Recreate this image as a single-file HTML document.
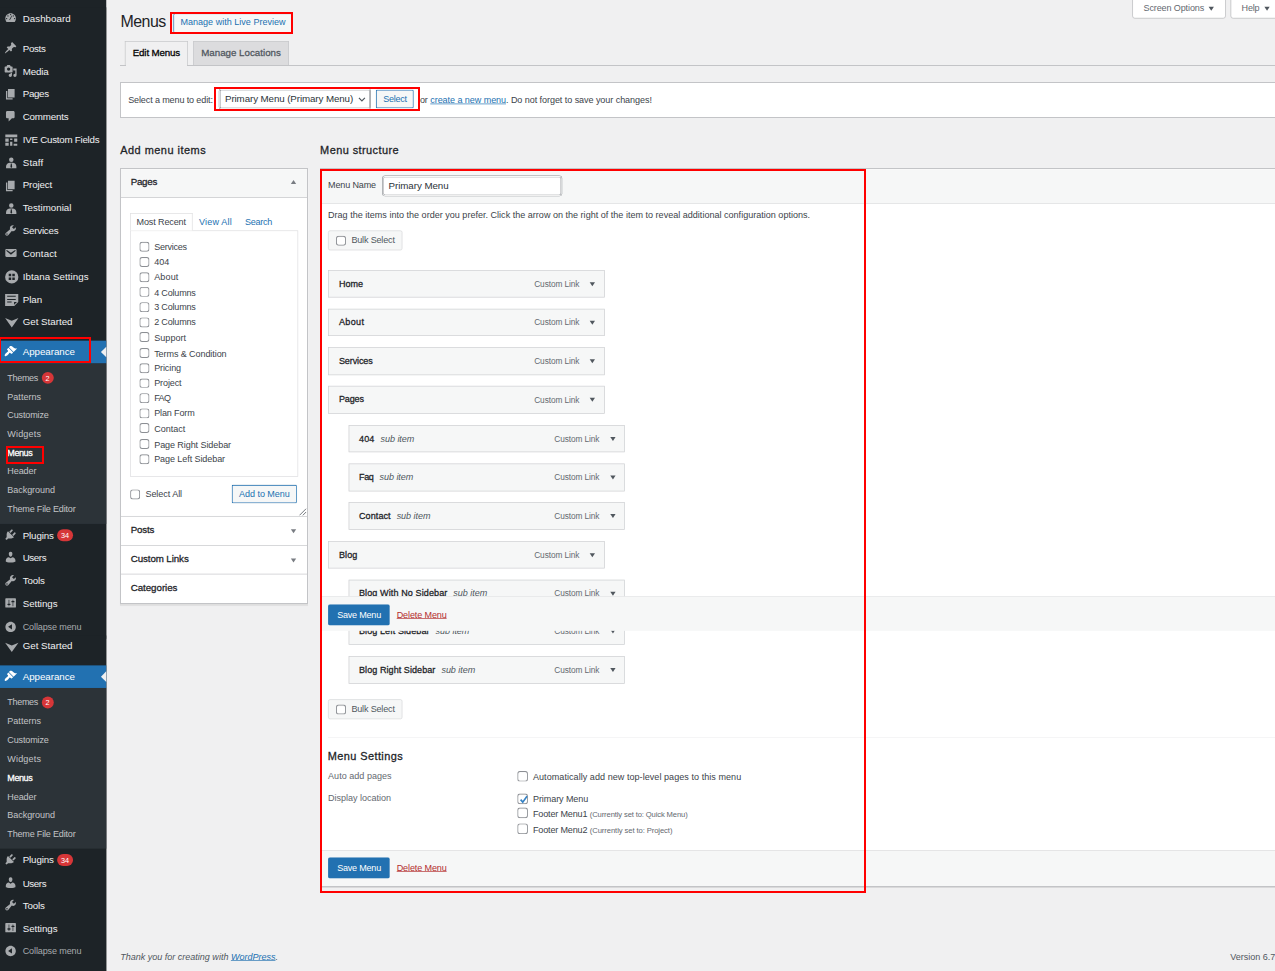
<!DOCTYPE html>
<html lang="en">
<head>
<meta charset="utf-8">
<title>Menus</title>
<style>
html,body{margin:0;padding:0;background:#f0f0f1;}
body{width:1275px;height:971px;overflow:hidden;position:relative;}
#root{position:absolute;left:0;top:0;width:1920px;height:1463px;transform:scale(0.6640625);transform-origin:0 0;font-family:"Liberation Sans",sans-serif;font-size:13.6px;line-height:1.4;color:#3c434a;background:#f0f0f1;overflow:hidden;}
#root *{box-sizing:border-box;}
a{color:#2271b1;}
/* ---------- sidebar ---------- */
#side{position:absolute;left:0;top:0;width:160px;height:1463px;background:#1d2327;}
.sec{position:absolute;left:0;width:160px;background:#1d2327;}
.mi{position:relative;height:34.3px;width:160px;color:#f0f0f1;font-size:14.7px;line-height:34.3px;white-space:nowrap;}
.mi svg{position:absolute;left:5.5px;top:6.2px;width:20px;height:20px;fill:#a7aaad;overflow:visible;}
.mi .t{position:absolute;left:34.2px;top:0;}
.mi.pg .t{top:-0.8px;}
.mi.pg svg{top:7.5px;}
.mi.cur{background:#2271b1;color:#fff;}
.mi.cur svg{fill:#fff;}
.mi.cur:after{content:"";position:absolute;right:0;top:9.1px;border:8px solid transparent;border-right-color:#f0f0f1;}
.mi.col{color:#a7aaad;font-size:13.6px;}
.sep{height:11px;}
.sub{background:#2c3338;padding:8px 0 7px;}
.sub div{height:28.16px;line-height:28.16px;font-size:13.6px;color:#c3c4c7;padding-left:11px;white-space:nowrap;}
.sub div.c{color:#fff;}
.bdg{display:inline-block;vertical-align:top;background:#d63638;color:#fff;font-size:11px;line-height:18px;height:18px;min-width:18px;border-radius:9px;text-align:center;padding:0 5.7px;margin:8px 0 0 5px;font-weight:normal;}
.sub .bdg{margin:5px 0 0 5.5px;padding:0 5px;}

/* ---------- main ---------- */
#main{position:absolute;left:0;top:0;width:1920px;height:1463px;}
.abs{position:absolute;white-space:nowrap;}
.smeta{position:absolute;top:-10px;height:37.5px;background:#fff;border:1px solid #b4b5b8;border-radius:0 0 4px 4px;color:#646970;font-size:13.6px;line-height:22px;padding:9.5px 0 0 16px;white-space:nowrap;}
.tri{position:relative;top:1px;display:inline-block;width:0;height:0;border:4.5px solid transparent;border-top:6px solid #50575e;border-bottom:0;vertical-align:middle;}
h1{position:absolute;left:181.5px;top:17.5px;margin:0;font-size:24px;font-weight:normal;line-height:29.9px;color:#1d2327;white-space:nowrap;}
.pta{position:absolute;left:260.5px;top:19.6px;width:179.3px;text-align:center;text-indent:1.5px;height:30px;border:1px solid #2271b1;border-left-width:1.5px;border-radius:3px;background:#f6f7f7;color:#2271b1;font-size:13.6px;line-height:25px;padding:0;white-space:nowrap;}
.tabline{display:none;}
.ntab{position:absolute;top:61.7px;height:36.8px;border:1px solid #c3c4c7;border-bottom:none;background:#dcdcde;color:#50575e;font-size:14.7px;line-height:24px;padding:5.7px 0 0;text-align:center;white-space:nowrap;}
.ntab.act{background:#f0f0f1;color:#000;height:37.8px;}
.mm{position:absolute;left:180.8px;top:124px;width:1760px;height:52.5px;background:#fff;border:1px solid #fff;}
.sel{position:absolute;height:30px;border:1px solid transparent;box-shadow:0 0 0 .5px #7a7d82,inset 0 0 0 .9px #7a7d82;border-radius:3px;background:#fff;color:#2c3338;font-size:14.7px;line-height:28px;padding:0 8px;white-space:nowrap;}
.btn{position:absolute;height:30px;border:1px solid transparent;box-shadow:inset 0 0 0 1.3px #2271b1;border-radius:3px;background:#f6f7f7;color:#2271b1;font-size:13.6px;line-height:28px;padding:0 10px;white-space:nowrap;text-align:center;}
.btn.pri{box-shadow:none;background:#2271b1;color:#fff;height:32px;line-height:30px;padding:0 12px;}
.btn.gray{box-shadow:none;border:1px solid #d5d6d8;color:#50575e;background:#f6f7f7;}
h2{position:absolute;margin:0;font-size:16.5px;font-weight:normal;line-height:24px;color:#1d2327;white-space:nowrap;}
/* accordion */
.acc{position:absolute;left:180.8px;top:253.6px;width:283px;height:657px;background:#fff;border:1px solid #fff;box-shadow:0 1px 1px rgba(0,0,0,.06);}
.acch{position:absolute;left:0;width:281px;height:43.5px;border-bottom:1px solid #c3c4c7;font-size:14.7px;color:#1d2327;line-height:40.8px;padding-left:15px;}
.acch i{position:absolute;right:17px;top:19px;width:0;height:0;border:4px solid transparent;}
.acch i.up{border-bottom:6px solid #787c82;border-top:0;top:16.5px;}
.acch i.dn{border-top:6px solid #787c82;border-bottom:0;}
.ptab{position:absolute;font-size:13.6px;white-space:nowrap;line-height:18px;}
.panel{position:absolute;left:14.4px;top:92px;width:252.5px;height:371.5px;border:1px solid #dcdcde;background:#fff;}
.cb{position:absolute;width:15.1px;height:14.9px;border-radius:4px;background:#fff;box-shadow:inset 0 0 0 1.4px #8c8f94,inset 0 2px 2px rgba(0,0,0,.06);}
.row{position:absolute;left:13px;height:22.7px;font-size:13.6px;line-height:22.7px;color:#3c434a;white-space:nowrap;}
.row .cb{left:-0.6px;top:2.7px;}
.row>span{position:absolute;left:22px;top:0;}
/* menu management */
.mgmt{position:absolute;left:482.6px;top:254px;width:1460px;height:1082px;background:#fff;border:1px solid #fff;box-shadow:0 1px 1px rgba(0,0,0,.08);}
.mhead{position:absolute;left:0;top:0;width:100%;height:51.5px;background:#f6f7f7;border-bottom:1px solid #dcdcde;}
.mfoot{position:absolute;left:0;bottom:0;width:100%;height:53px;background:#f6f7f7;border-top:1px solid #dcdcde;}
.inp{position:absolute;height:30px;border:1px solid transparent;box-shadow:0 0 0 .6px #8c8f94,inset 0 0 0 .8px #8c8f94;border-radius:4px;background:#fff;color:#2c3338;font-size:14.7px;line-height:28px;padding:0 8px;}
.bar{position:absolute;width:416.6px;height:41.5px;background:#f6f7f7;border:1px solid #cdced1;font-size:13.6px;color:#1d2327;line-height:39.5px;padding-left:15px;white-space:nowrap;}
.bar em{font-weight:normal;font-style:italic;color:#50575e;margin-left:9px;}
.bar b{position:absolute;right:37.6px;top:1.3px;font-weight:normal;font-size:12.5px;color:#646970;}
.bar i{position:absolute;right:13.6px;top:17px;width:0;height:0;border:4.2px solid transparent;border-top:6.5px solid #50575e;border-bottom:0;}
.sticky{position:absolute;background:#f6f7f7;z-index:5;}
.del{position:absolute;color:#b32d2e;text-decoration:underline;font-size:13.6px;white-space:nowrap;}
.lbl{position:absolute;font-size:13.6px;color:#646970;white-space:nowrap;}
.txt{position:absolute;font-size:13.6px;color:#3c434a;white-space:nowrap;}
.sm{font-size:11.5px;color:#646970;}
/* ---------- annotations ---------- */
.red{position:absolute;border:2px solid #f00;z-index:50;box-sizing:border-box;}
.sb{-webkit-text-stroke:0.4px currentColor;}
h2 .sb,h2.sb{-webkit-text-stroke:0.42px currentColor;}
.secb .sub div{height:28.4px;line-height:28.4px;}
.ln{position:absolute;box-sizing:border-box;border:1px solid #c3c4c7;z-index:40;}
.hl{position:absolute;height:1px;background:#c3c4c7;z-index:40;}
.seca .sub{padding-bottom:8.1px;}
.seca .mi.col{margin-top:1.5px;}
.secb>.mi:first-child .t{top:-1.9px;}
</style>
</head>
<body>
<div id="root">
<div id="side">
<div class="sec seca" style="top:11px">
<div class="mi"><svg viewBox="0 0 20 20"><path d="M3.76 16h12.48A7.96 7.96 0 0 0 18 11c0-4.42-3.58-8-8-8s-8 3.58-8 8c0 1.89.66 3.63 1.76 5zM10 4a1 1 0 1 1 0 2 1 1 0 0 1 0-2zM6 6a1 1 0 1 1 0 2 1 1 0 0 1 0-2zm8 0a1 1 0 1 1 0 2 1 1 0 0 1 0-2zm-5.37 5.55l2.75-4.82c.12-.2.37-.26.57-.14.19.11.26.35.16.55l-2.36 5.01c-.38.72-1.12.8-1.69.47s-.81-.35.57-1.07zM4 10a1 1 0 1 1 0 2 1 1 0 0 1 0-2zm12 0a1 1 0 1 1 0 2 1 1 0 0 1 0-2z"/></svg><span class="t"><span style="letter-spacing:0.053px">Dashboard</span></span></div>
<div class="sep"></div>
<div class="mi"><svg viewBox="0 0 20 20"><path d="M10.44 3.02l1.82-1.82 6.36 6.35-1.83 1.82c-1.05-.68-2.48-.57-3.41.36l-.75.75c-.92.93-1.04 2.35-.35 3.41l-1.83 1.82-2.41-2.41-2.8 2.79c-.42.42-3.38 2.71-3.8 2.29s1.86-3.39 2.28-3.81l2.79-2.79L4.1 9.36l1.83-1.82c1.05.69 2.48.57 3.4-.36l.75-.75c.93-.92 1.05-2.35.36-3.41z"/></svg><span class="t"><span style="letter-spacing:-0.487px">Posts</span></span></div>
<div class="mi"><svg viewBox="0 0 20 20"><path d="M13 11V4c0-.55-.45-1-1-1h-1.67L9 1H5L3.67 3H2c-.55 0-1 .45-1 1v7c0 .55.45 1 1 1h10c.55 0 1-.45 1-1zM7 4.5a2.5 2.5 0 1 1 0 5 2.5 2.5 0 0 1 0-5zM14 6h5v10.5a2.5 2.5 0 1 1-2.5-2.5c.17 0 .34.02.5.05V9h-3V6zm-4 8.05V13h2v3.5A2.5 2.5 0 1 1 9.5 14c.17 0 .34.02.5.05z"/></svg><span class="t"><span style="letter-spacing:-0.178px">Media</span></span></div>
<div class="mi pg"><svg viewBox="0 0 20 20"><path d="M6 15V2h10v13H6zm-1 1h8v2H3V5h2v11z"/></svg><span class="t"><span style="letter-spacing:-0.475px">Pages</span></span></div>
<div class="mi"><svg viewBox="0 0 20 20"><path d="M5 2h9c1.1 0 2 .9 2 2v7c0 1.1-.9 2-2 2h-2l-5 5v-5H5c-1.1 0-2-.9-2-2V4c0-1.1.9-2 2-2z"/></svg><span class="t"><span style="letter-spacing:-0.249px">Comments</span></span></div>
<div class="mi"><svg viewBox="0 0 20 20"><path d="M2 2.600h18v4.100H2zM2 8.700h5.100v4.800H2zM9.200 8.700h3.400v2H9.200zM15.300 8.700H20v4.800h-4.700zM2 14.900h5.100v4.400H2zM9.200 13.500h3.400v5.800H9.200zM14.500 16.300H20v3h-5.500z"/></svg><span class="t"><span style="letter-spacing:-0.364px">IVE Custom Fields</span></span></div>
<div class="mi"><svg viewBox="0 0 20 20"><path d="M11 3a3.400 3.400 0 1 1 0 6.800A3.400 3.400 0 0 1 11 3zM3.100 19.400v-2.500c0-3.400 2.900-5.800 5.900-5.800h4c3 0 5.700 2.400 5.700 5.800v2.500zM10.300 12.200l-.6 5.200 1.300 1.400 1.300-1.400-.6-5.200z" fill-rule="evenodd"/></svg><span class="t"><span style="letter-spacing:0.267px">Staff</span></span></div>
<div class="mi pg"><svg viewBox="0 0 20 20"><path d="M6 15V2h10v13H6zm-1 1h8v2H3V5h2v11z"/></svg><span class="t"><span style="letter-spacing:-0.191px">Project</span></span></div>
<div class="mi"><svg viewBox="0 0 20 20"><path d="M11 3a3.400 3.400 0 1 1 0 6.800A3.400 3.400 0 0 1 11 3zM3.100 19.400v-2.500c0-3.400 2.900-5.800 5.900-5.800h4c3 0 5.700 2.400 5.700 5.800v2.500zM10.300 12.200l-.6 5.200 1.300 1.400 1.300-1.400-.6-5.200z" fill-rule="evenodd"/></svg><span class="t"><span style="letter-spacing:-0.013px">Testimonial</span></span></div>
<div class="mi"><svg viewBox="0 0 20 20"><path d="M16.680 9.770a4.543 4.543 0 0 1-4.950.99l-5.410 6.520c-.99.990-2.590.990-3.580 0s-.99-2.590 0-3.570l6.520-5.420c-.68-1.650-.35-3.610.990-4.950 1.280-1.280 3.120-1.620 4.720-1.060l-2.890 2.890 2.820 2.820 2.860-2.870c.53 1.580.18 3.390-1.080 4.650zM3.810 16.210c.4.39 1.040.39 1.430 0 .4-.4.4-1.040 0-1.430-.39-.4-1.030-.4-1.430 0a1.020 1.020 0 0 0 0 1.430z"/></svg><span class="t"><span style="letter-spacing:-0.324px">Services</span></span></div>
<div class="mi"><svg viewBox="0 0 20 20"><path d="M3.870 4h13.250C18.370 4 19 4.590 19 5.790v8.420c0 1.190-.63 1.790-1.880 1.790H3.870c-1.250 0-1.880-.6-1.880-1.790V5.790c0-1.200.63-1.790 1.880-1.790zm6.620 8.600l6.740-5.530c.24-.2.430-.66.130-1.070-.29-.41-.82-.42-1.170-.17l-5.700 3.860L4.800 5.830c-.35-.25-.88-.24-1.170.17-.3.410-.11.870.130 1.070z"/></svg><span class="t"><span style="letter-spacing:0.121px">Contact</span></span></div>
<div class="mi"><svg viewBox="0 0 20 20"><path d="M11.700 2a10 10 0 1 1 0 20 10 10 0 0 1 0-20zM7.100 7.400v3.750h3.750V7.400zm5.450 0v3.750h3.750V7.400zM7.100 12.850v3.750h3.750v-3.750zm5.450 0v3.750h3.750v-3.750z" fill-rule="evenodd"/></svg><span class="t"><span style="letter-spacing:0.088px">Ibtana Settings</span></span></div>
<div class="mi"><svg viewBox="0 0 20 20"><path d="M1.700 2.750h19.800v12l-6 6H1.700zM4.800 5.500v1.400h12.900V5.500zm0 4.700v1.400h12.900v-1.400zm0 3.900v1.300h6.700v-1.300zM15.200 14.600v4.300l4.300-4.300z" fill-rule="evenodd"/></svg><span class="t"><span style="letter-spacing:-0.064px">Plan</span></span></div>
<div class="mi"><svg viewBox="0 0 20 20"><path d="M1.700 5L11.750 8.900 21.800 5 11.750 19z"/></svg><span class="t"><span style="letter-spacing:-0.012px">Get Started</span></span></div>
<div class="sep"></div>
<div class="mi cur"><svg viewBox="0 0 20 20"><path d="M14.480 11.060L7.410 3.990l1.500-1.500c.5-.56 2.300-.47 3.510.32 1.210.8 1.430 1.280 2.910 2.100 1.180.64 2.450 1.260 4.450.85zm-.71.71L6.700 4.700 4.930 6.470c-.39.390-.39 1.020 0 1.410l1.060 1.060c.39.390.39 1.030 0 1.420-.6.6-1.430 1.110-2.210 1.690-.35.260-.7.530-1.010.84C1.430 14.230.4 16.080 1.400 17.070c.99 1 2.840-.030 4.180-1.360.31-.31.580-.66.850-1.020.57-.78 1.080-1.610 1.690-2.210a.996.996 0 0 1 1.410 0l1.060 1.060c.39.390 1.020.390 1.410 0z"/></svg><span class="t"><span style="letter-spacing:-0.051px">Appearance</span></span></div>
<div class="sub"><div><span style="letter-spacing:-0.485px">Themes</span><span class="bdg">2</span></div><div><span style="letter-spacing:0.018px">Patterns</span></div><div><span style="letter-spacing:-0.216px">Customize</span></div><div><span style="letter-spacing:0.248px">Widgets</span></div><div class="c"><span class="sb" style="letter-spacing:-0.641px">Menus</span></div><div><span style="letter-spacing:-0.124px">Header</span></div><div><span style="letter-spacing:-0.081px">Background</span></div><div><span style="letter-spacing:-0.267px">Theme File Editor</span></div></div>
<div class="mi"><svg viewBox="0 0 20 20"><path d="M13.110 4.360L9.870 7.600 8 5.730l3.240-3.240c.35-.34 1.050-.2 1.560.32.520.51.660 1.210.31 1.550zm-8 1.770l.91-1.120 9.010 9.010-1.190.84c-.71.710-2.630 1.160-3.820 1.160H6.140L4.900 17.260c-.59.590-1.540.590-2.120 0a1.490 1.490 0 0 1 0-2.120l1.240-1.240v-3.880c0-1.130.4-3.190 1.090-3.890zm7.260 3.970l3.240-3.240c.34-.35 1.040-.21 1.550.31.520.51.660 1.210.31 1.550l-3.240 3.250z"/></svg><span class="t"><span style="letter-spacing:-0.198px">Plugins</span><span class="bdg">34</span></span></div>
<div class="mi"><svg viewBox="0 0 20 20"><path d="M10 9.250c-2.270 0-2.730-3.440-2.730-3.440C7 4.020 7.820 2 9.970 2c2.160 0 2.980 2.020 2.710 3.810 0 0-.41 3.440-2.680 3.440zm0 2.570L12.720 10c2.390 0 4.520 2.330 4.520 4.530v2.490s-3.650 1.130-7.240 1.130c-3.650 0-7.240-1.130-7.240-1.130v-2.490c0-2.250 1.940-4.480 4.470-4.480z"/></svg><span class="t"><span style="letter-spacing:-0.592px">Users</span></span></div>
<div class="mi"><svg viewBox="0 0 20 20"><path d="M16.680 9.770a4.543 4.543 0 0 1-4.950.99l-5.410 6.520c-.99.990-2.590.990-3.580 0s-.99-2.590 0-3.570l6.520-5.420c-.68-1.650-.35-3.610.990-4.950 1.280-1.280 3.120-1.620 4.720-1.060l-2.890 2.890 2.820 2.820 2.860-2.870c.53 1.580.18 3.390-1.080 4.650zM3.810 16.210c.4.39 1.040.39 1.430 0 .4-.4.4-1.040 0-1.430-.39-.4-1.030-.4-1.430 0a1.020 1.020 0 0 0 0 1.430z"/></svg><span class="t"><span style="letter-spacing:-0.254px">Tools</span></span></div>
<div class="mi"><svg viewBox="0 0 20 20"><path d="M18 16V4c0-.55-.45-1-1-1H3c-.55 0-1 .45-1 1v12c0 .55.45 1 1 1h14c.55 0 1-.45 1-1zM8 11h1c.55 0 1 .45 1 1s-.45 1-1 1H8v1.500c0 .28-.22.5-.5.5s-.5-.22-.5-.5V13H6c-.55 0-1-.45-1-1s.45-1 1-1h1V5.500c0-.28.22-.5.5-.5s.5.22.5.5V11zm5-2h-1c-.55 0-1-.45-1-1s.45-1 1-1h1V5.500c0-.28.22-.5.5-.5s.5.22.5.5V7h1c.55 0 1 .45 1 1s-.45 1-1 1h-1v5.500c0 .28-.22.5-.5.5s-.5-.22-.5-.5V9z"/></svg><span class="t"><span style="letter-spacing:-0.075px">Settings</span></span></div>
<div class="mi col"><svg viewBox="0 0 20 20"><path d="M10 2.160c4.330 0 7.840 3.510 7.840 7.840s-3.510 7.840-7.840 7.840S2.160 14.330 2.160 10 5.670 2.160 10 2.160zm2 11.720V6.120L6.180 9.970z"/></svg><span class="t"><span style="letter-spacing:-0.178px">Collapse menu</span></span></div>
</div>
<div class="sec secb" style="top:956.5px;height:520px">
<div class="mi"><svg viewBox="0 0 20 20"><path d="M1.700 5L11.750 8.900 21.800 5 11.750 19z"/></svg><span class="t"><span style="letter-spacing:-0.012px">Get Started</span></span></div>
<div class="sep"></div>
<div class="mi cur"><svg viewBox="0 0 20 20"><path d="M14.480 11.060L7.410 3.990l1.500-1.500c.5-.56 2.300-.47 3.510.32 1.210.8 1.430 1.280 2.910 2.100 1.180.64 2.450 1.260 4.450.85zm-.71.71L6.700 4.700 4.930 6.470c-.39.390-.39 1.020 0 1.410l1.060 1.060c.39.390.39 1.030 0 1.420-.6.6-1.430 1.110-2.210 1.690-.35.260-.7.530-1.010.84C1.430 14.230.4 16.080 1.400 17.070c.99 1 2.840-.030 4.180-1.360.31-.31.580-.66.850-1.020.57-.78 1.080-1.610 1.690-2.210a.996.996 0 0 1 1.410 0l1.060 1.060c.39.390 1.020.390 1.410 0z"/></svg><span class="t"><span style="letter-spacing:-0.051px">Appearance</span></span></div>
<div class="sub"><div><span style="letter-spacing:-0.485px">Themes</span><span class="bdg">2</span></div><div><span style="letter-spacing:0.018px">Patterns</span></div><div><span style="letter-spacing:-0.216px">Customize</span></div><div><span style="letter-spacing:0.248px">Widgets</span></div><div class="c"><span class="sb" style="letter-spacing:-0.641px">Menus</span></div><div><span style="letter-spacing:-0.124px">Header</span></div><div><span style="letter-spacing:-0.081px">Background</span></div><div><span style="letter-spacing:-0.267px">Theme File Editor</span></div></div>
<div class="mi"><svg viewBox="0 0 20 20"><path d="M13.110 4.360L9.870 7.600 8 5.730l3.240-3.240c.35-.34 1.050-.2 1.560.32.520.51.660 1.210.31 1.550zm-8 1.770l.91-1.120 9.010 9.010-1.190.84c-.71.710-2.630 1.160-3.820 1.160H6.140L4.900 17.260c-.59.590-1.540.590-2.120 0a1.490 1.490 0 0 1 0-2.120l1.240-1.240v-3.880c0-1.130.4-3.190 1.090-3.890zm7.260 3.970l3.240-3.240c.34-.35 1.040-.21 1.550.31.520.51.660 1.210.31 1.550l-3.240 3.250z"/></svg><span class="t"><span style="letter-spacing:-0.198px">Plugins</span><span class="bdg">34</span></span></div>
<div class="mi"><svg viewBox="0 0 20 20"><path d="M10 9.250c-2.270 0-2.730-3.440-2.730-3.440C7 4.020 7.820 2 9.970 2c2.160 0 2.980 2.020 2.710 3.810 0 0-.41 3.440-2.680 3.440zm0 2.570L12.720 10c2.390 0 4.520 2.330 4.520 4.530v2.490s-3.650 1.130-7.240 1.130c-3.650 0-7.240-1.130-7.240-1.130v-2.490c0-2.250 1.940-4.480 4.470-4.480z"/></svg><span class="t"><span style="letter-spacing:-0.592px">Users</span></span></div>
<div class="mi"><svg viewBox="0 0 20 20"><path d="M16.680 9.770a4.543 4.543 0 0 1-4.950.99l-5.410 6.520c-.99.990-2.590.990-3.580 0s-.99-2.590 0-3.570l6.520-5.420c-.68-1.650-.35-3.610.990-4.950 1.280-1.280 3.120-1.620 4.720-1.060l-2.890 2.890 2.820 2.820 2.860-2.870c.53 1.580.18 3.390-1.080 4.650zM3.810 16.210c.4.39 1.040.39 1.430 0 .4-.4.4-1.040 0-1.430-.39-.4-1.030-.4-1.430 0a1.020 1.020 0 0 0 0 1.430z"/></svg><span class="t"><span style="letter-spacing:-0.254px">Tools</span></span></div>
<div class="mi"><svg viewBox="0 0 20 20"><path d="M18 16V4c0-.55-.45-1-1-1H3c-.55 0-1 .45-1 1v12c0 .55.45 1 1 1h14c.55 0 1-.45 1-1zM8 11h1c.55 0 1 .45 1 1s-.45 1-1 1H8v1.500c0 .28-.22.5-.5.5s-.5-.22-.5-.5V13H6c-.55 0-1-.45-1-1s.45-1 1-1h1V5.500c0-.28.22-.5.5-.5s.5.22.5.5V11zm5-2h-1c-.55 0-1-.45-1-1s.45-1 1-1h1V5.500c0-.28.22-.5.5-.5s.5.22.5.5V7h1c.55 0 1 .45 1 1s-.45 1-1 1h-1v5.500c0 .28-.22.5-.5.5s-.5-.22-.5-.5V9z"/></svg><span class="t"><span style="letter-spacing:-0.075px">Settings</span></span></div>
<div class="mi col"><svg viewBox="0 0 20 20"><path d="M10 2.160c4.330 0 7.840 3.510 7.840 7.840s-3.510 7.840-7.840 7.840S2.160 14.330 2.160 10 5.670 2.160 10 2.160zm2 11.720V6.120L6.180 9.970z"/></svg><span class="t"><span style="letter-spacing:-0.178px">Collapse menu</span></span></div>
</div>
</div>
<div id="main">
<div class="smeta" style="left:1705px;width:141px"><span style="letter-spacing:-0.177px">Screen Options</span><span class="tri" style="margin-left:7px"></span></div>
<div class="smeta" style="left:1852.7px;width:80px"><span style="letter-spacing:-0.288px">Help</span><span class="tri" style="margin-left:7px"></span></div>
<h1><span style="letter-spacing:-0.807px">Menus</span></h1>
<div class="pta"><span style="letter-spacing:0.015px">Manage with Live Preview</span></div>
<div class="tabline"></div>
<div class="ntab act" style="left:188.4px;width:94.3px"><span class="sb" style="letter-spacing:-0.217px">Edit Menus</span></div>
<div class="ntab" style="left:291px;width:143.9px"><span class="sb">Manage Locations</span></div>
<div class="mm">
 <div class="txt" style="left:11.2px;top:17.1px;line-height:18px"><span style="letter-spacing:-0.180px">Select a menu to edit:</span></div>
 <div class="sel" style="left:148px;top:9.3px;width:228.4px"><span style="letter-spacing:-0.140px">Primary Menu (Primary Menu)</span><svg style="position:absolute;right:6px;top:10px;width:12px;height:10px" viewBox="0 0 12 10"><path d="M1.500 2.500L6 7l4.500-4.500" fill="none" stroke="#50575e" stroke-width="1.800"/></svg></div>
 <div class="btn" style="left:383.4px;top:9.3px;width:59.3px;padding:0"><span style="letter-spacing:-0.358px">Select</span></div>
 <div class="txt" style="left:450.5px;top:17.3px;line-height:18px"><span style="letter-spacing:-0.090px">or <a href="#">create a new menu</a>. Do not forget to save your changes!</span></div>
</div>
<h2 style="left:181px;top:213.6px"><span class="sb" style="letter-spacing:0.732px">Add menu items</span></h2>
<h2 style="left:482px;top:213.6px"><span class="sb" style="letter-spacing:0.640px">Menu structure</span></h2>
<div class="acc">
 <div class="acch" style="top:0;height:43px;line-height:38px;background:#f6f7f7"><span class="sb" style="letter-spacing:-0.400px">Pages</span><i class="up"></i></div>
 <div class="ptab" style="left:14.2px;top:66px;width:94px;height:26.800px;border:1px solid #dcdcde;border-bottom:none;background:#fff;z-index:2"></div>
 <div class="ptab" style="left:23.800px;top:71.6px;color:#3c434a;z-index:3"><span style="letter-spacing:-0.177px">Most Recent</span></div>
 <div class="ptab" style="left:117.900px;top:71.6px;color:#2271b1"><span style="letter-spacing:0.269px">View All</span></div>
 <div class="ptab" style="left:187.100px;top:71.6px;color:#2271b1"><span style="letter-spacing:-0.363px">Search</span></div>
 <div class="panel">
<div class="row" style="top:14.20px"><div class="cb"></div><span><span style="letter-spacing:-0.369px">Services</span></span></div>
<div class="row" style="top:36.85px"><div class="cb"></div><span><span style="letter-spacing:0.026px">404</span></span></div>
<div class="row" style="top:59.50px"><div class="cb"></div><span><span style="letter-spacing:0.190px">About</span></span></div>
<div class="row" style="top:82.15px"><div class="cb"></div><span><span style="letter-spacing:-0.274px">4 Columns</span></span></div>
<div class="row" style="top:104.80px"><div class="cb"></div><span><span style="letter-spacing:-0.274px">3 Columns</span></span></div>
<div class="row" style="top:127.45px"><div class="cb"></div><span><span style="letter-spacing:-0.274px">2 Columns</span></span></div>
<div class="row" style="top:150.10px"><div class="cb"></div><span><span style="letter-spacing:0.069px">Support</span></span></div>
<div class="row" style="top:173.95px"><div class="cb"></div><span><span style="letter-spacing:-0.127px">Terms &amp; Condition</span></span></div>
<div class="row" style="top:196.60px"><div class="cb"></div><span><span style="letter-spacing:-0.176px">Pricing</span></span></div>
<div class="row" style="top:219.25px"><div class="cb"></div><span><span style="letter-spacing:-0.175px">Project</span></span></div>
<div class="row" style="top:241.90px"><div class="cb"></div><span><span style="letter-spacing:-0.952px">FAQ</span></span></div>
<div class="row" style="top:264.55px"><div class="cb"></div><span><span style="letter-spacing:-0.214px">Plan Form</span></span></div>
<div class="row" style="top:287.20px"><div class="cb"></div><span><span style="letter-spacing:0.021px">Contact</span></span></div>
<div class="row" style="top:311.05px"><div class="cb"></div><span><span style="letter-spacing:-0.123px">Page Right Sidebar</span></span></div>
<div class="row" style="top:333.70px"><div class="cb"></div><span><span style="letter-spacing:-0.130px">Page Left Sidebar</span></span></div>
 </div>
 <div class="cb" style="left:14.2px;top:482.8px"></div>
 <div class="txt" style="left:37.2px;top:481.4px;line-height:18px"><span style="letter-spacing:-0.073px">Select All</span></div>
 <div class="btn" style="left:166.1px;top:474.8px;width:100.5px;padding:0"><span style="letter-spacing:-0.060px">Add to Menu</span></div>
 <svg style="position:absolute;left:268px;top:510px;width:12px;height:12px" viewBox="0 0 12 12"><path d="M11 1L1 11M11 6L6 11" stroke="#50575e" stroke-width="1.200" fill="none"/></svg>
 <div style="position:absolute;left:0;top:522.4px;width:281px;height:1px;background:#c3c4c7"></div>
 <div class="acch" style="top:523.4px;height:44px"><span class="sb" style="letter-spacing:-0.299px">Posts</span><i class="dn"></i></div>
 <div class="acch" style="top:567.4px;height:43px"><span class="sb" style="letter-spacing:-0.136px">Custom Links</span><i class="dn"></i></div>
 <div class="acch" style="top:610.4px;border-bottom:none"><span class="sb" style="letter-spacing:-0.062px">Categories</span></div>
</div>
<div class="mgmt">
 <div class="mhead"></div>
 <div class="lbl" style="left:10.4px;top:15.3px;line-height:18px;color:#3c434a"><span style="letter-spacing:-0.221px">Menu Name</span></div>
 <div class="inp" style="left:92.4px;top:9.6px;width:270px"><span style="letter-spacing:-0.070px">Primary Menu</span></div>
 <div class="txt" style="left:10.4px;top:59.8px;line-height:18px"><span style="letter-spacing:0.016px">Drag the items into the order you prefer. Click the arrow on the right of the item to reveal additional configuration options.</span></div>
 <div class="btn gray" style="left:10.8px;top:92.1px;width:111.6px;padding:0"><div class="cb" style="left:10.6px;top:6.8px"></div><span style="position:absolute;left:33.8px;top:0"><span style="letter-spacing:-0.251px">Bulk Select</span></span></div>
<div class="bar" style="left:10.8px;top:151.5px"><span class="sb" style="letter-spacing:0.059px">Home</span><b><span style="letter-spacing:-0.142px">Custom Link</span></b><i></i></div>
<div class="bar" style="left:10.8px;top:209.8px"><span class="sb" style="letter-spacing:0.529px">About</span><b><span style="letter-spacing:-0.142px">Custom Link</span></b><i></i></div>
<div class="bar" style="left:10.8px;top:268.1px"><span class="sb" style="letter-spacing:-0.175px">Services</span><b><span style="letter-spacing:-0.142px">Custom Link</span></b><i></i></div>
<div class="bar" style="left:10.8px;top:326.4px"><span class="sb" style="letter-spacing:-0.225px">Pages</span><b><span style="letter-spacing:-0.142px">Custom Link</span></b><i></i></div>
<div class="bar" style="left:41px;top:384.7px"><span class="sb" style="letter-spacing:0.252px">404</span><em><span style="letter-spacing:-0.068px">sub item</span></em><b><span style="letter-spacing:-0.142px">Custom Link</span></b><i></i></div>
<div class="bar" style="left:41px;top:443.0px"><span class="sb" style="letter-spacing:-0.500px">Faq</span><em><span style="letter-spacing:-0.068px">sub item</span></em><b><span style="letter-spacing:-0.142px">Custom Link</span></b><i></i></div>
<div class="bar" style="left:41px;top:501.3px"><span class="sb" style="letter-spacing:0.121px">Contact</span><em><span style="letter-spacing:-0.068px">sub item</span></em><b><span style="letter-spacing:-0.142px">Custom Link</span></b><i></i></div>
<div class="bar" style="left:10.8px;top:559.6px"><span class="sb" style="letter-spacing:0.163px">Blog</span><b><span style="letter-spacing:-0.142px">Custom Link</span></b><i></i></div>
<div class="bar" style="left:41px;top:617.9px"><span class="sb" style="letter-spacing:0.158px">Blog With No Sidebar</span><em><span style="letter-spacing:-0.068px">sub item</span></em><b><span style="letter-spacing:-0.142px">Custom Link</span></b><i></i></div>
<div class="bar" style="left:41px;top:674.7px"><span class="sb" style="letter-spacing:0.117px">Blog Left Sidebar</span><em><span style="letter-spacing:-0.068px">sub item</span></em><b><span style="letter-spacing:-0.142px">Custom Link</span></b><i></i></div>
<div class="bar" style="left:41px;top:733.0px"><span class="sb" style="letter-spacing:0.099px">Blog Right Sidebar</span><em><span style="letter-spacing:-0.068px">sub item</span></em><b><span style="letter-spacing:-0.142px">Custom Link</span></b><i></i></div>

 <div class="sticky" style="left:0;top:643.3px;width:100%;height:51.4px;border-top:1px solid #e3e4e6"></div>
 <div class="btn pri" style="left:10.5px;top:654.9px;width:93.2px;padding:0;z-index:6"><span style="letter-spacing:-0.313px">Save Menu</span></div>
 <div class="del" style="left:113.8px;top:661.8px;line-height:18px;z-index:6"><span style="letter-spacing:-0.178px">Delete Menu</span></div>
 <div class="btn gray" style="left:10.8px;top:798.4px;width:111.6px;padding:0"><div class="cb" style="left:10.6px;top:6.8px"></div><span style="position:absolute;left:33.8px;top:0"><span style="letter-spacing:-0.251px">Bulk Select</span></span></div>
 <div style="position:absolute;left:10.4px;top:855.4px;right:0;height:1px;background:#f0f0f1"></div>
 <h2 style="left:10px;top:871.9px"><span class="sb" style="letter-spacing:0.609px">Menu Settings</span></h2>
 <div class="lbl" style="left:10.4px;top:904.5px;line-height:18px"><span style="letter-spacing:0.040px">Auto add pages</span></div>
 <div class="cb" style="left:295.1px;top:906.3px;width:16.2px;height:16px"></div>
 <div class="txt" style="left:319px;top:905.800px;line-height:18px"><span style="letter-spacing:0.076px">Automatically add new top-level pages to this menu</span></div>
 <div class="lbl" style="left:10.4px;top:937.8px;line-height:18px"><span style="letter-spacing:-0.012px">Display location</span></div>
 <div class="cb" style="left:295.1px;top:939.5px;width:16.2px;height:16px"><svg viewBox="0 0 16 16" style="position:absolute;left:0;top:0;width:16px;height:16px;overflow:visible"><path d="M5 9.200l3.200 3.700 6.400-8.800" fill="none" stroke="#3582c4" stroke-width="2.500"/></svg></div>
 <div class="txt" style="left:319px;top:939px;line-height:18px"><span style="letter-spacing:-0.121px">Primary Menu</span></div>
 <div class="cb" style="left:295.1px;top:960.7px;width:16.2px;height:16px"></div>
 <div class="txt" style="left:319px;top:961.5px;line-height:18px"><span style="letter-spacing:-0.234px">Footer Menu1</span> <span class="sm"><span style="letter-spacing:-0.206px">(Currently set to: Quick Menu)</span></span></div>
 <div class="cb" style="left:295.1px;top:984.8px;width:16.2px;height:16px"></div>
 <div class="txt" style="left:319px;top:986.3px;line-height:18px"><span style="letter-spacing:-0.234px">Footer Menu2</span> <span class="sm"><span style="letter-spacing:-0.132px">(Currently set to: Project)</span></span></div>
 <div class="mfoot" style="top:1025.4px;bottom:auto;height:54.6px"></div>
 <div class="btn pri" style="left:10.5px;top:1035.8px;width:93.2px;padding:0"><span style="letter-spacing:-0.313px">Save Menu</span></div>
 <div class="del" style="left:113.8px;top:1042.7px;line-height:18px"><span style="letter-spacing:-0.178px">Delete Menu</span></div>
</div>
<div class="txt" style="left:181px;top:1432px;line-height:18px;font-style:italic;color:#50575e"><span style="letter-spacing:-0.010px">Thank you for creating with <a href="#">WordPress</a>.</span></div>
<div class="txt" style="left:1852.5px;top:1432px;line-height:18px;color:#50575e">Version 6.7.1</div>
</div>
</div>
<div class="hl" style="left:120px;top:65px;width:6px"></div>
<div class="hl" style="left:187px;top:65px;width:1100px"></div>
<div class="ln" style="left:120px;top:82px;width:1170px;height:36px"></div>
<div class="ln" style="left:120px;top:168px;width:188px;height:436px;box-shadow:0 1px 0 rgba(0,0,0,.13)"></div>
<div class="ln" style="left:320px;top:168px;width:970px;height:719px;box-shadow:0 1px 0 rgba(0,0,0,.07)"></div>
<div class="red" style="left:170px;top:12px;width:123px;height:22px"></div>
<div class="red" style="left:214px;top:87px;width:206px;height:24px"></div>
<div class="red" style="left:-1px;top:337px;width:92px;height:26px"></div>
<div class="red" style="left:6px;top:446px;width:38px;height:18px"></div>
<div class="red" style="left:320px;top:169px;width:546px;height:724px"></div>
</body>
</html>
